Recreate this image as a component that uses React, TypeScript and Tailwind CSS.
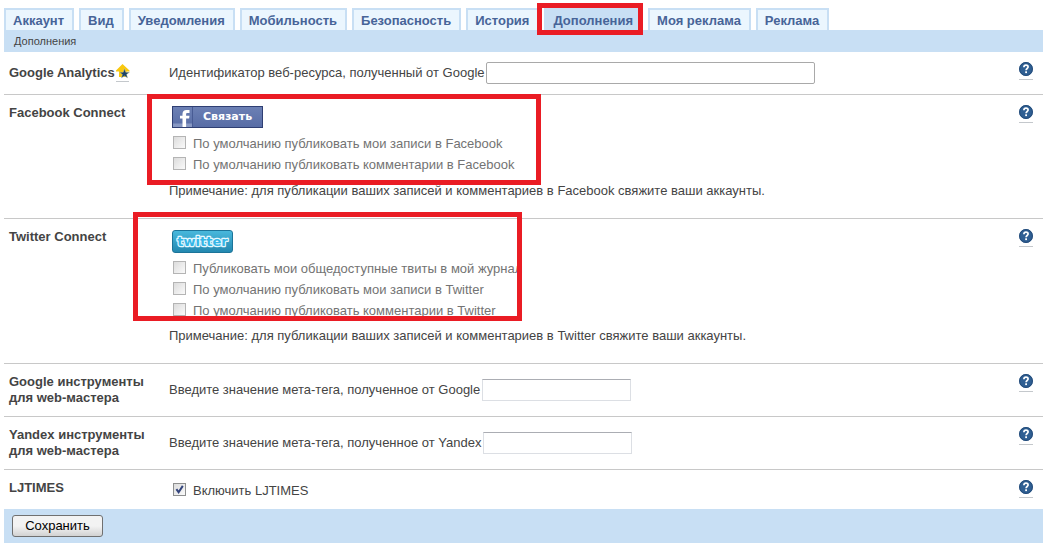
import { useState } from "react";
import type { ReactNode } from "react";

const tabs = [
  "Аккаунт",
  "Вид",
  "Уведомления",
  "Мобильность",
  "Безопасность",
  "История",
  "Дополнения",
  "Моя реклама",
  "Реклама",
];

function Highlight({ className }: { className: string }) {
  return (
    <div
      aria-hidden="true"
      className={`pointer-events-none absolute z-10 border-[5px] border-[#ea1c24] ${className}`}
    />
  );
}

function Help() {
  return (
    <a href="#help" aria-label="Справка" className="block h-[18px] w-[14px] border-b border-[#c4c8cc]">
      <svg viewBox="0 0 14 14" className="block size-[14px]">
        <circle cx="7" cy="7" r="6.9" fill="#2f5f93" />
        <circle cx="7" cy="7" r="6.4" fill="none" stroke="#234a78" strokeWidth="1" />
        <path
          d="M4.9 5.3C4.9 3.9 5.8 3.2 7 3.2s2.1.7 2.1 1.8c0 1.5-2 1.5-2 3.2"
          fill="none"
          stroke="#fff"
          strokeWidth="1.7"
        />
        <rect x="6.2" y="9.3" width="1.8" height="1.8" fill="#fff" />
      </svg>
    </a>
  );
}

function Row({
  title,
  titleFor,
  icon,
  className,
  children,
}: {
  title: string;
  titleFor?: string;
  icon?: ReactNode;
  className: string;
  children: ReactNode;
}) {
  return (
    <section className={`relative flex items-start border-[#c8c8c8] pr-[10px] pl-[5px] ${className}`}>
      <h2 className="flex w-[160px] shrink-0 pr-3 font-bold">
        {titleFor ? <label htmlFor={titleFor}>{title}</label> : title}
        {icon}
      </h2>
      <div className="min-w-0 flex-1">{children}</div>
      <div className="absolute top-[10px] right-[10px]">
        <Help />
      </div>
    </section>
  );
}

function Check({
  id,
  label,
  muted = false,
  initial = false,
}: {
  id: string;
  label: string;
  muted?: boolean;
  initial?: boolean;
}) {
  const [on, setOn] = useState(initial);
  return (
    <div className="flex h-[21px] items-start pl-1">
      <span className="relative block size-[13px] shrink-0">
        <input
          id={id}
          type="checkbox"
          checked={on}
          onChange={(e) => setOn(e.target.checked)}
          className={`block size-[13px] appearance-none border bg-linear-to-br from-[#dcdcdc] to-[#fafafa] ${
            muted ? "border-[#b4b4b4]" : "border-[#8e8f8f]"
          }`}
        />
        {on && (
          <svg viewBox="0 0 13 13" className="pointer-events-none absolute inset-0 size-[13px]">
            <path d="M3.4 6.2L5.6 9.2L9.8 2.9" fill="none" stroke="#33447c" strokeWidth="2" />
          </svg>
        )}
      </span>
      <label htmlFor={id} className={`pl-[7px] leading-4 ${muted ? "text-[#737373]" : ""}`}>
        {label}
      </label>
    </div>
  );
}

function UpgradeIcon() {
  return (
    <svg viewBox="0 0 14 18" className="-mt-px ml-px h-[18px] w-[14px] shrink-0" aria-hidden="true">
      <path d="M6.5 0L13.500 6.5V7.500H10.500V13H3V7.500H0V6.5Z" fill="#f9c80e" />
      <path
        d="M8.500 4.600L9.800 8.300H13.500L10.600 10.500L11.700 14L8.500 11.900L5.300 14L6.400 10.500L3.500 8.300H7.200Z"
        fill="#1d4468"
        stroke="#d9d9a8"
        strokeWidth=".4"
      />
      <path d="M0 17.500H13" stroke="#c4c8cc" />
    </svg>
  );
}

export default function App() {
  const [active, setActive] = useState("Дополнения");
  return (
    <form
      onSubmit={(e) => e.preventDefault()}
      className="bg-white pt-2 pr-[17px] pl-1 font-['Liberation_Sans',Arial,sans-serif] text-[13px] leading-4 text-[#444]"
    >
      <nav className="flex gap-[5px]">
        {tabs.map((tab) => (
          <div key={tab} className="relative">
            <a
              href="#tab"
              onClick={() => setActive(tab)}
              className={`block h-[22px] border-x-2 border-t-2 border-[#c8dff4] pt-[3px] pr-2 pl-[7px] font-bold whitespace-nowrap text-[#476498] ${
                tab === active ? "bg-[#c8dff4]" : "bg-[#ebf6fe]"
              }`}
            >
              {tab}
            </a>
            {tab === "Дополнения" && <Highlight className="-top-[5px] right-0 -left-[7px] h-8" />}
          </div>
        ))}
      </nav>
      <div className="h-[22px] bg-[#c8dff4] pt-[3px] pl-[10px] text-[11px]">Дополнения</div>

      <Row title="Google Analytics" titleFor="ga" icon={<UpgradeIcon />} className="h-[43px] border-b pt-[10px] [&>h2]:pt-[3px]">
        <div className="flex items-center gap-px">
          <label htmlFor="ga" className="whitespace-nowrap">
            Идентификатор веб-ресурса, полученный от Google
          </label>
          <input id="ga" type="text" className="h-[22px] w-[329px] min-w-0 rounded-[2px] border border-[#a9a9a9] bg-white px-1" />
        </div>
      </Row>

      <Row title="Facebook Connect" className="border-b pt-[10px] pb-[19px]">
        <button
          type="button"
          className="mt-px ml-[3px] flex h-[22px] w-[91px] items-stretch border border-[#2f3f73] bg-linear-to-b from-[#6c80b4] to-[#586da6] text-white"
        >
          <svg viewBox="0 0 20 20" className="size-5 shrink-0" aria-hidden="true">
            <rect y="16.500" width="20" height="3.500" fill="#8798c3" />
            <path d="M9.500 20V11.500H7V8.700H9.500V7C9.500 4.300 11 3 13.400 3H16.500V5.900H14.500C13.500 5.900 13.100 6.300 13.100 7.200V8.700H16.500L16.100 11.500H13.100V20Z" fill="#fff" />
            <path d="M19.500 0V20" stroke="#485b94" />
          </svg>
          <span className="flex-1 pt-0.5 text-center font-['DejaVu_Sans',Verdana,sans-serif] text-[11px] font-bold">
            Связать
          </span>
        </button>
        <div className="mt-2">
          <Check muted id="fb-posts" label="По умолчанию публиковать мои записи в Facebook" />
          <Check muted id="fb-comments" label="По умолчанию публиковать комментарии в Facebook" />
        </div>
        <p className="mt-[5px]">
          Примечание: для публикации ваших записей и комментариев в Facebook свяжите ваши аккаунты.
        </p>
        <Highlight className="-top-px left-[143px] h-[91px] w-[394px]" />
      </Row>

      <Row title="Twitter Connect" className="border-b pt-[10px] pb-[19px]">
        <button
          type="button"
          aria-label="twitter"
          className="mt-px ml-[3px] block h-[23px] w-[61px] rounded-[3px] border border-[#1c7499] bg-linear-to-b from-[#48b8dc] to-[#2388b0]"
        >
          <svg viewBox="0 0 59 21" className="block h-[21px] w-[59px]">
            <text
              x="29.500"
              y="15"
              textAnchor="middle"
              fontFamily="DejaVu Sans, sans-serif"
              fontSize="13"
              fontWeight="bold"
              fill="#35b6e6"
              stroke="#e4f8ff"
              strokeWidth="2.4"
              strokeLinejoin="round"
              paintOrder="stroke"
            >
              twitter
            </text>
          </svg>
        </button>
        <div className="mt-2">
          <Check muted id="tw-import" label="Публиковать мои общедоступные твиты в мой журнал" />
          <Check muted id="tw-posts" label="По умолчанию публиковать мои записи в Twitter" />
          <Check muted id="tw-comments" label="По умолчанию публиковать комментарии в Twitter" />
        </div>
        <p className="mt-1">
          Примечание: для публикации ваших записей и комментариев в Twitter свяжите ваши аккаунты.
        </p>
        <Highlight className="-top-[7px] left-[129px] h-[109px] w-[389px]" />
      </Row>

      <Row title="Google инструменты для web-мастера" titleFor="google-tag" className="border-b py-[10px]">
        <div className="mt-[5px] -mb-[5px] flex items-center gap-0.5">
          <label htmlFor="google-tag" className="whitespace-nowrap">
            Введите значение мета-тега, полученное от Google
          </label>
          <input id="google-tag" type="text" className="h-[22px] w-[149px] min-w-0 border border-[#dcdfe4] border-t-[#abadb3] bg-white px-1" />
        </div>
      </Row>

      <Row title="Yandex инструменты для web-мастера" titleFor="yandex-tag" className="border-b py-[10px]">
        <div className="mt-[5px] -mb-[5px] flex items-center gap-0.5">
          <label htmlFor="yandex-tag" className="whitespace-nowrap">
            Введите значение мета-тега, полученное от Yandex
          </label>
          <input id="yandex-tag" type="text" className="h-[22px] w-[149px] min-w-0 border border-[#dcdfe4] border-t-[#abadb3] bg-white px-1" />
        </div>
      </Row>

      <Row title="LJTIMES" className="pt-[10px] pb-[5px]">
        <div className="pt-[3px]">
          <Check initial id="ljtimes" label="Включить LJTIMES" />
        </div>
      </Row>

      <div className="bg-[#c8dff4] px-2 py-[6px]">
        <button
          type="submit"
          className="block h-[22px] w-[91px] rounded-[3px] border border-[#707070] bg-linear-to-b from-[#f3f3f3] from-50% to-[#d2d2d2] text-[13px] leading-4 text-black"
        >
          Сохранить
        </button>
      </div>
    </form>
  );
}
